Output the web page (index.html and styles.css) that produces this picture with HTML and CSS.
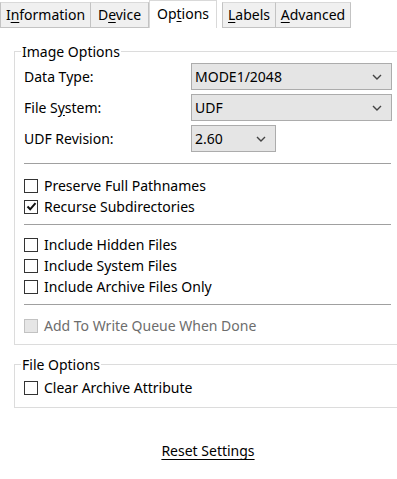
FILE: index.html
```html
<!DOCTYPE html>
<html lang="en">
<head>
    <meta charset="UTF-8">
    <meta name="viewport" content="width=device-width, initial-scale=1.0">
    <title>Options</title>
    <link rel="stylesheet" href="styles.css">
</head>
<body>
    <div class="page">
        <div class="tabs">
            <div class="tab tab-info">I<u>n</u>formation</div>
            <div class="tab tab-device">D<u>e</u>vice</div>
            <div class="tab tab-options selected">Op<u>t</u>ions</div>
            <div class="tab tab-labels"><u>L</u>abels</div>
            <div class="tab tab-advanced"><u>A</u>dvanced</div>
        </div>

        <fieldset class="group image-group">
            <legend>Image Options</legend>

            <div class="fields">
                <div class="field-label">Data Type:</div>
                <div class="combo combo-wide">
                    <span>MODE1/2048</span>
                    <svg width="10" height="6" viewBox="0 0 10 6"><polyline points="1,1 5,5 9,1" fill="none" stroke="#444" stroke-width="1.4"/></svg>
                </div>

                <div class="field-label">File S<u>y</u>stem:</div>
                <div class="combo combo-wide">
                    <span>UDF</span>
                    <svg width="10" height="6" viewBox="0 0 10 6"><polyline points="1,1 5,5 9,1" fill="none" stroke="#444" stroke-width="1.4"/></svg>
                </div>

                <div class="field-label">UDF Revision:</div>
                <div class="combo combo-small">
                    <span>2.60</span>
                    <svg width="10" height="6" viewBox="0 0 10 6"><polyline points="1,1 5,5 9,1" fill="none" stroke="#444" stroke-width="1.4"/></svg>
                </div>
            </div>

            <div class="sep sep-a"></div>

            <div class="check"><span class="box"></span>Preserve Full Pathnames</div>
            <div class="check">
                <span class="box">
                    <svg width="11" height="11" viewBox="0 0 11 11"><path d="M1.5 5.5 L4.2 8.3 L9.5 2.2" fill="none" stroke="#111" stroke-width="2"/></svg>
                </span>Recurse Subdirectories
            </div>

            <div class="sep sep-b"></div>

            <div class="check"><span class="box"></span>Include Hidden Files</div>
            <div class="check"><span class="box"></span>Include System Files</div>
            <div class="check"><span class="box"></span>Include Archive Files Only</div>

            <div class="sep sep-c"></div>

            <div class="check disabled"><span class="box"></span>Add To Write Queue When Done</div>
        </fieldset>

        <fieldset class="group file-group">
            <legend>File Options</legend>
            <div class="check"><span class="box"></span>Clear Archive Attribute</div>
        </fieldset>

        <div class="reset">
            <a href="#">Reset Settings</a>
        </div>
    </div>
</body>
</html>
```

FILE: styles.css
```css
html, body { margin: 0; padding: 0; overflow: hidden; }
body {
    font-family: 'Noto Sans', 'Open Sans', sans-serif;
    font-size: 14px;
    color: #000;
    background-color: #fff;
}
.page { width: 416px; }

/* tab strip */
.tabs {
    display: flex;
    align-items: flex-end;
    height: 28px;
}
.tab {
    box-sizing: border-box;
    height: 26px;
    line-height: 23px;
    text-align: center;
    background-color: #f0f0f0;
    border: 1px solid #c3c3c3;
    border-top-color: #d9d9d9;
}
.tab u { text-underline-offset: 2px; }
.tab-info { width: 91px; }
.tab-device { width: 58px; border-left: none; }
.tab-options { width: 68px; }
.tab-labels { width: 54px; }
.tab-advanced { width: 75px; border-left: none; }
.tab.selected {
    height: 28px;
    line-height: 26px;
    background-color: #fff;
    border-color: #d9d9d9;
    border-bottom: none;
    margin-right: 5px;
}

/* group boxes */
.group {
    margin: 14px 14px 0 14px;
    padding: 2px 10px 8px 9px;
    border: 1px solid #dcdcdc;
    min-width: 0;
}
.group legend {
    padding: 0 1px;
    margin-left: -3px;
    line-height: 19px;
}
.file-group { margin-top: 10px; padding-top: 3px; padding-bottom: 9px; }

.fields {
    display: grid;
    grid-template-columns: 167px auto;
    row-gap: 4px;
    align-items: center;
}
.field-label { line-height: 20px; }
.field-label u { text-underline-offset: 2px; }
.combo {
    box-sizing: border-box;
    height: 27px;
    display: flex;
    align-items: center;
    justify-content: space-between;
    padding: 0 9px 0 3px;
    background-color: #e5e5e5;
    border: 1px solid #acacac;
}
.combo-wide { width: 201px; }
.combo-small { width: 85px; }

.sep { height: 1px; background-color: #a0a0a0; }
.sep-a { margin: 11px 0 11px 0; }
.sep-b { margin: 7px 0 9px 0; }
.sep-c { margin: 7px 0 10px 0; }

/* checkboxes */
.check {
    display: flex;
    align-items: center;
    gap: 6px;
    height: 21px;
    white-space: nowrap;
}
.box {
    box-sizing: border-box;
    width: 14px;
    height: 14px;
    border: 1px solid #333;
    background-color: #fff;
    display: flex;
    align-items: center;
    justify-content: center;
    flex-shrink: 0;
}
.check.disabled { color: #6d6d6d; }
.check.disabled .box { background-color: #e6e6e6; border-color: #c2c2c2; }

.reset {
    text-align: center;
    margin-top: 33px;
}
.reset a { color: #000; text-underline-offset: 3px; }
```
